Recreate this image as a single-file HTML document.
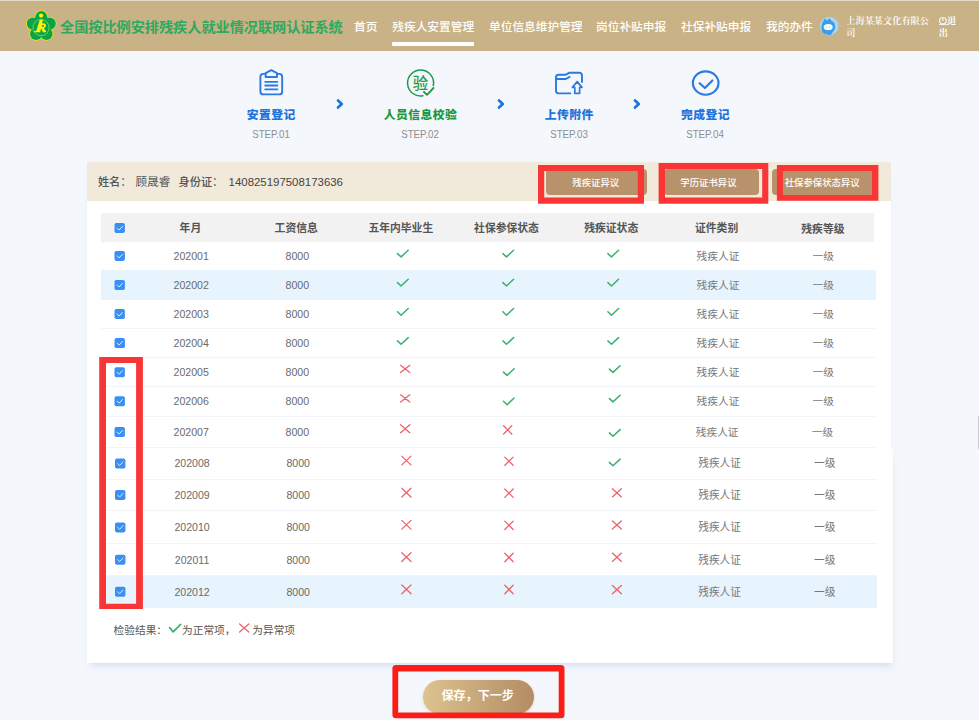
<!DOCTYPE html>
<html lang="zh-CN">
<head>
<meta charset="utf-8">
<title>全国按比例安排残疾人就业情况联网认证系统</title>
<style>
*{box-sizing:border-box;margin:0;padding:0}
html,body{width:979px;height:720px;overflow:hidden}
body{background:#f4f7fc;font-family:"Liberation Sans","Noto Sans CJK SC",sans-serif;position:relative;color:#555}
#hdr{position:absolute;left:0;top:0;width:979px;height:51px;background:#c9b285;border-top:1px solid #e3dccb}
#title{position:absolute;left:60px;top:15px;font-size:14.2px;font-weight:bold;color:#2ea95e;white-space:nowrap;line-height:24px;letter-spacing:-0.05px}
.nav{position:absolute;top:15.5px;font-size:11.7px;font-weight:500;color:#fff;white-space:nowrap;line-height:22px}
#uline{position:absolute;left:392.2px;top:42.3px;width:81.8px;height:3.3px;background:#fff;border-radius:1px}
.co{position:absolute;left:846.3px;top:16.1px;font-weight:600;width:86px;font-size:9.2px;line-height:11.4px;color:#fff;word-break:break-all;font-family:"Liberation Serif","Noto Serif CJK SC",serif}
.out{position:absolute;left:947px;top:15.6px;font-weight:700;font-size:9.2px;line-height:11.4px;color:#fff;white-space:nowrap;font-family:"Liberation Serif","Noto Serif CJK SC",serif}
.ov{position:absolute;left:0;top:0;pointer-events:none}
.st{position:absolute;transform:translate(-50%,-50%);white-space:nowrap}
.st.t{font-size:11.8px;font-weight:900;line-height:16px;letter-spacing:0.45px;text-indent:0.45px}
.st.s{font-size:10.3px;color:#8e8e8e;line-height:12px;transform:translate(-50%,-50%) scaleX(0.945)}
#card{position:absolute;left:87px;top:162px;width:804px;height:501px;background:#fff;box-shadow:0 7px 6px -4px rgba(185,200,232,.5)}
#info{position:absolute;left:87px;top:162px;width:804px;height:38.8px;background:#f1e9d9}
.lbl{position:absolute;top:173px;font-size:11.55px;color:#555;line-height:18px;white-space:nowrap}
.lbl.b{font-weight:500;color:#555;font-size:11.2px}
.lbl.n{font-size:11.43px;color:#444}
.btn{position:absolute;top:169px;height:26.3px;background:#b8926a;border-radius:4px}
.bt{position:absolute;top:182.5px;transform:translate(-50%,-50%);color:#fff;font-size:9.4px;font-weight:500;white-space:nowrap;line-height:12px}
.red{position:absolute;border-style:solid;border-color:#fa3536}
.bg{position:absolute}
.c{position:absolute;transform:translate(-50%,-50%);white-space:nowrap;font-size:10.6px;color:#6a6a6a;line-height:14px}
.c.th{font-weight:bold;color:#555;font-size:10.8px}
.c.zh{color:#777;font-size:10.7px}
.lg{position:absolute;transform:translate(0,-50%);font-size:10.7px;color:#555;line-height:16px;white-space:nowrap}
#save{position:absolute;left:422.5px;top:679.5px;width:111px;height:34px;border-radius:17px;background:linear-gradient(90deg,#ddc390,#b38c63);box-shadow:0 1px 3px rgba(180,150,100,.35)}
#savet{position:absolute;left:477.7px;top:696.3px;transform:translate(-50%,-50%);color:#fff;font-size:12.1px;font-weight:700;white-space:nowrap;line-height:16px}
</style>
</head>
<body>
<div id="hdr"></div>
<svg class="ov" width="979" height="60" viewBox="0 0 979 60"><g fill="#f0e41a" stroke="#f0e41a" stroke-width="1.6"><circle cx="41.30" cy="17.21" r="6.10"/><circle cx="49.67" cy="23.59" r="6.10"/><circle cx="46.47" cy="33.93" r="6.10"/><circle cx="36.13" cy="33.93" r="6.10"/><circle cx="32.93" cy="23.59" r="6.10"/></g><g fill="#0ba44b"><circle cx="41.30" cy="17.21" r="6.10"/><circle cx="49.67" cy="23.59" r="6.10"/><circle cx="46.47" cy="33.93" r="6.10"/><circle cx="36.13" cy="33.93" r="6.10"/><circle cx="32.93" cy="23.59" r="6.10"/><circle cx="41.30" cy="26.45" r="8"/></g><circle cx="41" cy="27.6" r="8.1" fill="none" stroke="#86d337" stroke-width="0.9"/><circle cx="41.1" cy="15.6" r="2.1" fill="#fff100"/><g transform="translate(40.6 26.2) scale(1.1 1.06) translate(-40.4 -25.8)"><path d="M39.6 19.6L42.6 19.6L41.6 23.2C43.6 22.6 45.6 23.4 45.2 25.6C45 26.8 44.2 27.4 43.4 27.7L45.4 30.6L45 31.6L42.6 31.6L41.2 28.4L40.6 28.4L40 31.6L34.4 31.6L34.6 30.4L36.4 30.4Z" fill="#fff100"/><circle cx="42.6" cy="25.5" r="0.95" fill="#0ba44b"/></g><circle cx="829.2" cy="26" r="9.35" fill="#a6d6f7"/><path d="M823.2 21.6L824.6 18.4L827 20.4L829.6 18.2L831.4 20.8C834 22 835.4 24.4 835.2 27.2C835 29.6 833.6 31.4 832.4 32.4L831 34.9A9.3 9.3 0 0 1 822.4 32.2C821.8 30.4 821.4 28.4 821.6 26.4C821.8 24.4 822.4 22.8 823.2 21.6Z" fill="#3c9ce8"/><ellipse cx="828.2" cy="27.1" rx="4.5" ry="3.2" fill="#f6faff"/><circle cx="826.6" cy="27.1" r="0.5" fill="#9ab4d8"/><circle cx="829.8" cy="27.1" r="0.5" fill="#9ab4d8"/><g fill="none" stroke="#fff" stroke-width="1.1" stroke-linecap="round"><path d="M941.2 17.8A3.4 3.4 0 1 0 944.6 17.8"/><path d="M942.9 17.2V20.6"/></g></svg>
<div id="title">全国按比例安排残疾人就业情况联网认证系统</div>
<div class="nav" style="left:354px">首页</div>
<div class="nav" style="left:392.3px">残疾人安置管理</div>
<div class="nav" style="left:489px">单位信息维护管理</div>
<div class="nav" style="left:596px">岗位补贴申报</div>
<div class="nav" style="left:681px">社保补贴申报</div>
<div class="nav" style="left:766px">我的办件</div>
<div id="uline"></div>
<div class="co">上海某某文化有限公司</div>
<div class="out">退</div><div class="out" style="left:938.7px;top:27.6px">出</div><div class="bg" style="left:938.5px;top:24px;width:10px;height:0.8px;background:rgba(255,255,255,.75)"></div>
<svg class="ov" width="979" height="720" viewBox="0 0 979 720"><g fill="none" stroke="#2a7ae0" stroke-width="1.9" stroke-linejoin="round" stroke-linecap="round"><path d="M265.6 73.9H263.4a3 3 0 0 0-3 3V91.4a3 3 0 0 0 3 3H279.2a3 3 0 0 0 3-3V76.9a3 3 0 0 0-3-3H277"/><path d="M265.6 77V73.2L271.3 70.2L277 73.2V77Z"/><path d="M265.2 81.8H277.4M265.2 85.5H277.4M265.2 89.4H277.4" stroke-width="1.8"/></g><g fill="none" stroke="#1f9a48" stroke-width="1.5" stroke-linecap="round" stroke-linejoin="round"><path d="M433.3 85.6A13 13 0 1 0 423.0 95.75"/><polyline points="424.0,91.8 427.0,94.8 433.5,88.0" stroke-width="1.9"/></g><g fill="none" stroke="#2a7ae0" stroke-width="1.9" stroke-linejoin="round" stroke-linecap="round"><path d="M570.3 93.4H558.6a2.6 2.6 0 0 1-2.6-2.6V77.4a2.6 2.6 0 0 1 2.6-2.6H565.5L569.5 72.7H579.4a2.6 2.6 0 0 1 2.6 2.6V82"/><path d="M556 79H565.8L569.6 76.9" /><path d="M577.2 81.6L582 87.4H579.6V93.3H574.8V87.4H572.4Z" stroke-width="1.7"/></g><g fill="none" stroke="#2a7ae0" stroke-width="2.15" stroke-linecap="round" stroke-linejoin="round"><ellipse cx="705.7" cy="83" rx="12.8" ry="11.7"/><polyline points="699.6,83.2 704.9,88 712.4,80.4"/></g><polyline points="338.0,100.4 341.8,104 338.0,107.6" fill="none" stroke="#1e74dc" stroke-width="2.7" stroke-linecap="round" stroke-linejoin="round"/><polyline points="499.0,100.4 502.8,104 499.0,107.6" fill="none" stroke="#1e74dc" stroke-width="2.7" stroke-linecap="round" stroke-linejoin="round"/><polyline points="635.0,100.4 638.8,104 635.0,107.6" fill="none" stroke="#1e74dc" stroke-width="2.7" stroke-linecap="round" stroke-linejoin="round"/><text x="420.5" y="88.9" text-anchor="middle" font-size="15.4" font-weight="500" fill="#1f9a48" font-family="Liberation Sans,Noto Sans CJK SC,sans-serif">验</text></svg>
<div class="st t" style="left:271.0px;top:115.3px;color:#1e74dc">安置登记</div><div class="st s" style="left:271.0px;top:134.9px">STEP.01</div>
<div class="st t" style="left:420.2px;top:115.3px;color:#189a44">人员信息校验</div><div class="st s" style="left:420.2px;top:134.9px">STEP.02</div>
<div class="st t" style="left:569.0px;top:115.3px;color:#1e74dc">上传附件</div><div class="st s" style="left:569.0px;top:134.9px">STEP.03</div>
<div class="st t" style="left:705.2px;top:115.3px;color:#1e74dc">完成登记</div><div class="st s" style="left:705.2px;top:134.9px">STEP.04</div>

<div class="bg" style="left:880px;top:448.5px;width:13px;height:214.5px;background:#fff;box-shadow:2px 7px 6px -4px rgba(185,200,232,.5)"></div><div id="card"></div><div class="bg" style="left:977.6px;top:416px;width:1.4px;height:33px;background:#c9cdd3"></div>
<div id="info"></div>
<div class="lbl b" style="left:97.9px">姓名：</div><div class="lbl" style="left:135.6px">顾晟睿</div><div class="lbl b" style="left:178.5px">身份证：</div><div class="lbl n" style="left:228.6px">140825197508173636</div>
<div class="btn" style="left:545.9px;width:101px"></div><div class="bt" style="left:595.8px">残疾证异议</div>
<div class="btn" style="left:664px;width:94.9px"></div><div class="bt" style="left:708.5px">学历证书异议</div>
<div class="btn" style="left:772.2px;width:104px"></div><div class="bt" style="left:822.2px">社保参保状态异议</div>
<div class="bg" style="left:101px;top:212.8px;width:773.3px;height:28.8px;background:#f2f2f2"></div>
<div class="bg" style="left:101px;top:269.5px;width:775.0px;height:1px;background:#f2f4f8"></div>
<div class="bg" style="left:101px;top:270.1px;width:774.6px;height:29.7px;background:#e8f4fd"></div>
<div class="bg" style="left:101px;top:327.9px;width:775.0px;height:1px;background:#f2f4f8"></div>
<div class="bg" style="left:101px;top:357.0px;width:775.0px;height:1px;background:#f2f4f8"></div>
<div class="bg" style="left:101px;top:386.4px;width:775.0px;height:1px;background:#f2f4f8"></div>
<div class="bg" style="left:101px;top:415.8px;width:775.0px;height:1px;background:#f2f4f8"></div>
<div class="bg" style="left:101px;top:447.3px;width:775.0px;height:1px;background:#f2f4f8"></div>
<div class="bg" style="left:101px;top:478.7px;width:776.2px;height:1px;background:#f2f4f8"></div>
<div class="bg" style="left:101px;top:510.4px;width:776.2px;height:1px;background:#f2f4f8"></div>
<div class="bg" style="left:101px;top:543.1px;width:776.2px;height:1px;background:#f2f4f8"></div>
<div class="bg" style="left:101px;top:575.0px;width:776.2px;height:1px;background:#f2f4f8"></div>
<div class="bg" style="left:101px;top:575.6px;width:776.2px;height:32.3px;background:#e8f4fd"></div>
<svg class="ov" width="979" height="720" viewBox="0 0 979 720"><rect x="114.5" y="223.1" width="10.4" height="10" rx="1.8" fill="#3a8ff3"/><polyline points="117.2,228.1 119.1,230.1 122.5,226.4" fill="none" stroke="#d6e8ff" stroke-width="1.0" stroke-linecap="round" stroke-linejoin="round"/><rect x="114.5" y="250.9" width="10.4" height="10" rx="1.8" fill="#3a8ff3"/><polyline points="117.2,255.9 119.1,257.9 122.5,254.2" fill="none" stroke="#d6e8ff" stroke-width="1.0" stroke-linecap="round" stroke-linejoin="round"/><polyline points="397.5,253.6 401.1,256.9 408.2,250.2" fill="none" stroke="#3bb06f" stroke-width="1.5" stroke-linecap="round" stroke-linejoin="round"/><polyline points="502.9,253.6 506.5,256.9 513.6,250.2" fill="none" stroke="#3bb06f" stroke-width="1.5" stroke-linecap="round" stroke-linejoin="round"/><polyline points="607.9,253.6 611.5,256.9 618.6,250.2" fill="none" stroke="#3bb06f" stroke-width="1.5" stroke-linecap="round" stroke-linejoin="round"/><rect x="114.5" y="280.0" width="10.4" height="10" rx="1.8" fill="#3a8ff3"/><polyline points="117.2,285.0 119.1,287.0 122.5,283.3" fill="none" stroke="#d6e8ff" stroke-width="1.0" stroke-linecap="round" stroke-linejoin="round"/><polyline points="397.5,282.6 401.1,286.0 408.2,279.3" fill="none" stroke="#3bb06f" stroke-width="1.5" stroke-linecap="round" stroke-linejoin="round"/><polyline points="502.9,282.6 506.5,286.0 513.6,279.3" fill="none" stroke="#3bb06f" stroke-width="1.5" stroke-linecap="round" stroke-linejoin="round"/><polyline points="607.9,282.6 611.5,286.0 618.6,279.3" fill="none" stroke="#3bb06f" stroke-width="1.5" stroke-linecap="round" stroke-linejoin="round"/><rect x="114.5" y="309.1" width="10.4" height="10" rx="1.8" fill="#3a8ff3"/><polyline points="117.2,314.1 119.1,316.1 122.5,312.4" fill="none" stroke="#d6e8ff" stroke-width="1.0" stroke-linecap="round" stroke-linejoin="round"/><polyline points="397.5,311.8 401.1,315.2 408.2,308.5" fill="none" stroke="#3bb06f" stroke-width="1.5" stroke-linecap="round" stroke-linejoin="round"/><polyline points="502.9,311.8 506.5,315.2 513.6,308.5" fill="none" stroke="#3bb06f" stroke-width="1.5" stroke-linecap="round" stroke-linejoin="round"/><polyline points="607.9,311.8 611.5,315.2 618.6,308.5" fill="none" stroke="#3bb06f" stroke-width="1.5" stroke-linecap="round" stroke-linejoin="round"/><rect x="114.5" y="338.1" width="10.4" height="10" rx="1.8" fill="#3a8ff3"/><polyline points="117.2,343.1 119.1,345.1 122.5,341.4" fill="none" stroke="#d6e8ff" stroke-width="1.0" stroke-linecap="round" stroke-linejoin="round"/><polyline points="397.5,340.9 401.1,344.3 408.2,337.6" fill="none" stroke="#3bb06f" stroke-width="1.5" stroke-linecap="round" stroke-linejoin="round"/><polyline points="502.9,340.9 506.5,344.3 513.6,337.6" fill="none" stroke="#3bb06f" stroke-width="1.5" stroke-linecap="round" stroke-linejoin="round"/><polyline points="607.9,340.9 611.5,344.3 618.6,337.6" fill="none" stroke="#3bb06f" stroke-width="1.5" stroke-linecap="round" stroke-linejoin="round"/><rect x="114.5" y="367.3" width="10.4" height="10" rx="1.8" fill="#3a8ff3"/><polyline points="117.2,372.3 119.1,374.3 122.5,370.6" fill="none" stroke="#d6e8ff" stroke-width="1.0" stroke-linecap="round" stroke-linejoin="round"/><path d="M400.6 365.3L409.8 372.5M409.8 365.3L400.6 372.5" fill="none" stroke="#ec636b" stroke-width="1.3" stroke-linecap="round"/><polyline points="503.4,372.1 507.1,375.4 514.1,368.8" fill="none" stroke="#3bb06f" stroke-width="1.5" stroke-linecap="round" stroke-linejoin="round"/><polyline points="609.4,369.1 613.0,372.4 620.1,365.8" fill="none" stroke="#3bb06f" stroke-width="1.5" stroke-linecap="round" stroke-linejoin="round"/><rect x="114.5" y="396.2" width="10.4" height="10" rx="1.8" fill="#3a8ff3"/><polyline points="117.2,401.2 119.1,403.2 122.5,399.5" fill="none" stroke="#d6e8ff" stroke-width="1.0" stroke-linecap="round" stroke-linejoin="round"/><path d="M400.6 394.8L409.8 402.0M409.8 394.8L400.6 402.0" fill="none" stroke="#ec636b" stroke-width="1.3" stroke-linecap="round"/><polyline points="503.4,401.3 507.1,404.7 514.1,398.0" fill="none" stroke="#3bb06f" stroke-width="1.5" stroke-linecap="round" stroke-linejoin="round"/><polyline points="609.4,398.6 613.0,401.9 620.1,395.2" fill="none" stroke="#3bb06f" stroke-width="1.5" stroke-linecap="round" stroke-linejoin="round"/><rect x="114.5" y="427.1" width="10.4" height="10" rx="1.8" fill="#3a8ff3"/><polyline points="117.2,432.1 119.1,434.1 122.5,430.4" fill="none" stroke="#d6e8ff" stroke-width="1.0" stroke-linecap="round" stroke-linejoin="round"/><path d="M400.6 424.7L409.8 432.7M409.8 424.7L400.6 432.7" fill="none" stroke="#ec636b" stroke-width="1.3" stroke-linecap="round"/><path d="M503.6 425.8L511.8 434.0M511.8 425.8L503.6 434.0" fill="none" stroke="#ec636b" stroke-width="1.3" stroke-linecap="round"/><polyline points="609.4,432.9 613.0,436.3 620.1,429.6" fill="none" stroke="#3bb06f" stroke-width="1.5" stroke-linecap="round" stroke-linejoin="round"/><rect x="115.0" y="458.6" width="10.4" height="10" rx="1.8" fill="#3a8ff3"/><polyline points="117.7,463.6 119.6,465.6 123.0,461.9" fill="none" stroke="#d6e8ff" stroke-width="1.0" stroke-linecap="round" stroke-linejoin="round"/><path d="M401.8 456.1L411.0 464.9M411.0 456.1L401.8 464.9" fill="none" stroke="#ec636b" stroke-width="1.3" stroke-linecap="round"/><path d="M504.9 457.1L513.1 465.3M513.1 457.1L504.9 465.3" fill="none" stroke="#ec636b" stroke-width="1.3" stroke-linecap="round"/><polyline points="609.4,462.4 613.0,465.8 620.1,459.1" fill="none" stroke="#3bb06f" stroke-width="1.5" stroke-linecap="round" stroke-linejoin="round"/><rect x="115.0" y="490.1" width="10.4" height="10" rx="1.8" fill="#3a8ff3"/><polyline points="117.7,495.1 119.6,497.1 123.0,493.4" fill="none" stroke="#d6e8ff" stroke-width="1.0" stroke-linecap="round" stroke-linejoin="round"/><path d="M401.8 488.2L411.0 497.0M411.0 488.2L401.8 497.0" fill="none" stroke="#ec636b" stroke-width="1.3" stroke-linecap="round"/><path d="M504.8 489.0L513.2 497.4M513.2 489.0L504.8 497.4" fill="none" stroke="#ec636b" stroke-width="1.3" stroke-linecap="round"/><path d="M612.4 488.7L621.4 496.9M621.4 488.7L612.4 496.9" fill="none" stroke="#ec636b" stroke-width="1.3" stroke-linecap="round"/><rect x="115.0" y="522.4" width="10.4" height="10" rx="1.8" fill="#3a8ff3"/><polyline points="117.7,527.4 119.6,529.4 123.0,525.6" fill="none" stroke="#d6e8ff" stroke-width="1.0" stroke-linecap="round" stroke-linejoin="round"/><path d="M401.8 520.4L411.0 529.1M411.0 520.4L401.8 529.1" fill="none" stroke="#ec636b" stroke-width="1.3" stroke-linecap="round"/><path d="M504.8 521.1L513.2 529.5M513.2 521.1L504.8 529.5" fill="none" stroke="#ec636b" stroke-width="1.3" stroke-linecap="round"/><path d="M612.4 520.9L621.4 529.1M621.4 520.9L612.4 529.1" fill="none" stroke="#ec636b" stroke-width="1.3" stroke-linecap="round"/><rect x="115.0" y="554.7" width="10.4" height="10" rx="1.8" fill="#3a8ff3"/><polyline points="117.7,559.7 119.6,561.7 123.0,558.0" fill="none" stroke="#d6e8ff" stroke-width="1.0" stroke-linecap="round" stroke-linejoin="round"/><path d="M401.8 552.8L411.0 561.5M411.0 552.8L401.8 561.5" fill="none" stroke="#ec636b" stroke-width="1.3" stroke-linecap="round"/><path d="M504.8 553.3L513.2 561.7M513.2 553.3L504.8 561.7" fill="none" stroke="#ec636b" stroke-width="1.3" stroke-linecap="round"/><path d="M612.4 553.1L621.4 561.4M621.4 553.1L612.4 561.4" fill="none" stroke="#ec636b" stroke-width="1.3" stroke-linecap="round"/><rect x="115.0" y="586.8" width="10.4" height="10" rx="1.8" fill="#3a8ff3"/><polyline points="117.7,591.8 119.6,593.8 123.0,590.0" fill="none" stroke="#d6e8ff" stroke-width="1.0" stroke-linecap="round" stroke-linejoin="round"/><path d="M401.8 585.0L411.0 593.8M411.0 585.0L401.8 593.8" fill="none" stroke="#ec636b" stroke-width="1.3" stroke-linecap="round"/><path d="M504.8 585.3L513.2 593.7M513.2 585.3L504.8 593.7" fill="none" stroke="#ec636b" stroke-width="1.3" stroke-linecap="round"/><path d="M612.4 585.5L621.4 593.8M621.4 585.5L612.4 593.8" fill="none" stroke="#ec636b" stroke-width="1.3" stroke-linecap="round"/><polyline points="169.6,627.6 173.2,631.9 180.6,624.3" fill="none" stroke="#3bb06f" stroke-width="1.7" stroke-linecap="round" stroke-linejoin="round"/><path d="M239.6 623.9L248.8 632.1M248.8 623.9L239.6 632.1" fill="none" stroke="#ec636b" stroke-width="1.3" stroke-linecap="round"/></svg>
<div class="c th" style="left:190.4px;top:227.5px;">年月</div>
<div class="c th" style="left:296.2px;top:227.5px;">工资信息</div>
<div class="c th" style="left:400.8px;top:227.5px;">五年内毕业生</div>
<div class="c th" style="left:506.5px;top:227.5px;">社保参保状态</div>
<div class="c th" style="left:611.2px;top:227.5px;">残疾证状态</div>
<div class="c th" style="left:716.6px;top:227.5px;">证件类别</div>
<div class="c th" style="left:822.9px;top:229.1px;">残疾等级</div>
<div class="c num" style="left:191.2px;top:255.7px;">202001</div>
<div class="c num" style="left:297.3px;top:255.7px;">8000</div>
<div class="c zh" style="left:718.0px;top:255.7px;">残疾人证</div>
<div class="c zh" style="left:823.3px;top:255.7px;">一级</div>
<div class="c num" style="left:191.2px;top:284.8px;">202002</div>
<div class="c num" style="left:297.3px;top:284.8px;">8000</div>
<div class="c zh" style="left:718.0px;top:284.8px;">残疾人证</div>
<div class="c zh" style="left:823.3px;top:284.8px;">一级</div>
<div class="c num" style="left:191.2px;top:313.9px;">202003</div>
<div class="c num" style="left:297.3px;top:313.9px;">8000</div>
<div class="c zh" style="left:718.0px;top:313.9px;">残疾人证</div>
<div class="c zh" style="left:823.3px;top:313.9px;">一级</div>
<div class="c num" style="left:191.2px;top:342.9px;">202004</div>
<div class="c num" style="left:297.3px;top:342.9px;">8000</div>
<div class="c zh" style="left:718.0px;top:342.9px;">残疾人证</div>
<div class="c zh" style="left:823.3px;top:342.9px;">一级</div>
<div class="c num" style="left:191.2px;top:372.1px;">202005</div>
<div class="c num" style="left:297.3px;top:372.1px;">8000</div>
<div class="c zh" style="left:718.0px;top:372.1px;">残疾人证</div>
<div class="c zh" style="left:823.3px;top:372.1px;">一级</div>
<div class="c num" style="left:191.2px;top:401.0px;">202006</div>
<div class="c num" style="left:297.3px;top:401.0px;">8000</div>
<div class="c zh" style="left:718.0px;top:401.0px;">残疾人证</div>
<div class="c zh" style="left:823.3px;top:401.0px;">一级</div>
<div class="c num" style="left:191.2px;top:431.9px;">202007</div>
<div class="c num" style="left:297.3px;top:431.9px;">8000</div>
<div class="c zh" style="left:717.2px;top:431.9px;">残疾人证</div>
<div class="c zh" style="left:822.5px;top:431.9px;">一级</div>
<div class="c num" style="left:192.1px;top:463.4px;transform:translate(-50%,-50%) scaleY(1.06);">202008</div>
<div class="c num" style="left:298.2px;top:463.4px;transform:translate(-50%,-50%) scaleY(1.06);">8000</div>
<div class="c zh" style="left:719.6px;top:463.4px;transform:translate(-50%,-50%) scaleY(1.06);">残疾人证</div>
<div class="c zh" style="left:824.7px;top:463.4px;transform:translate(-50%,-50%) scaleY(1.06);">一级</div>
<div class="c num" style="left:192.1px;top:494.9px;transform:translate(-50%,-50%) scaleY(1.06);">202009</div>
<div class="c num" style="left:298.2px;top:494.9px;transform:translate(-50%,-50%) scaleY(1.06);">8000</div>
<div class="c zh" style="left:719.6px;top:494.9px;transform:translate(-50%,-50%) scaleY(1.06);">残疾人证</div>
<div class="c zh" style="left:824.7px;top:494.9px;transform:translate(-50%,-50%) scaleY(1.06);">一级</div>
<div class="c num" style="left:192.1px;top:527.1px;transform:translate(-50%,-50%) scaleY(1.06);">202010</div>
<div class="c num" style="left:298.2px;top:527.1px;transform:translate(-50%,-50%) scaleY(1.06);">8000</div>
<div class="c zh" style="left:719.6px;top:527.1px;transform:translate(-50%,-50%) scaleY(1.06);">残疾人证</div>
<div class="c zh" style="left:824.7px;top:527.1px;transform:translate(-50%,-50%) scaleY(1.06);">一级</div>
<div class="c num" style="left:192.1px;top:559.5px;transform:translate(-50%,-50%) scaleY(1.06);">202011</div>
<div class="c num" style="left:298.2px;top:559.5px;transform:translate(-50%,-50%) scaleY(1.06);">8000</div>
<div class="c zh" style="left:719.6px;top:559.5px;transform:translate(-50%,-50%) scaleY(1.06);">残疾人证</div>
<div class="c zh" style="left:824.7px;top:559.5px;transform:translate(-50%,-50%) scaleY(1.06);">一级</div>
<div class="c num" style="left:192.1px;top:591.5px;transform:translate(-50%,-50%) scaleY(1.06);">202012</div>
<div class="c num" style="left:298.2px;top:591.5px;transform:translate(-50%,-50%) scaleY(1.06);">8000</div>
<div class="c zh" style="left:719.6px;top:591.5px;transform:translate(-50%,-50%) scaleY(1.06);">残疾人证</div>
<div class="c zh" style="left:824.7px;top:591.5px;transform:translate(-50%,-50%) scaleY(1.06);">一级</div>
<div class="lg" style="left:113.6px;top:629.5px">检验结果：</div>
<div class="lg" style="left:182px;top:629.5px">为正常项，</div>
<div class="lg" style="left:252.3px;top:629.5px">为异常项</div>
<div id="save"></div><div id="savet">保存，下一步</div>
<svg class="ov" width="979" height="720" viewBox="0 0 979 720"><path d="M538.0 164.9H644.0V203.8H538.0ZM544.2 170.9V197.6H637.8V170.9Z" fill="#fa3536" fill-rule="evenodd"/><path d="M658.6 163.0H768.3V203.8H658.6ZM665.0 168.9V197.6H762.2V168.9Z" fill="#fa3536" fill-rule="evenodd"/><path d="M776.9 165.0H878.4V200.8H776.9ZM782.9 170.9V194.9H872.0V170.9Z" fill="#fa3536" fill-rule="evenodd"/><path d="M99.2 357.1H142.9V609.1H99.2ZM106.0 363.0V603.8H136.1V363.0Z" fill="#fa3536" fill-rule="evenodd"/><path d="M395.9 665.1H561.0A3.5 3.5 0 0 1 564.5 668.6V714.8A3.5 3.5 0 0 1 561.0 718.3H395.9A3.5 3.5 0 0 1 392.4 714.8V668.6A3.5 3.5 0 0 1 395.9 665.1ZM398.2 671.5V712.6H558.7V671.5Z" fill="#fb1e18" fill-rule="evenodd"/></svg>
</body>
</html>
